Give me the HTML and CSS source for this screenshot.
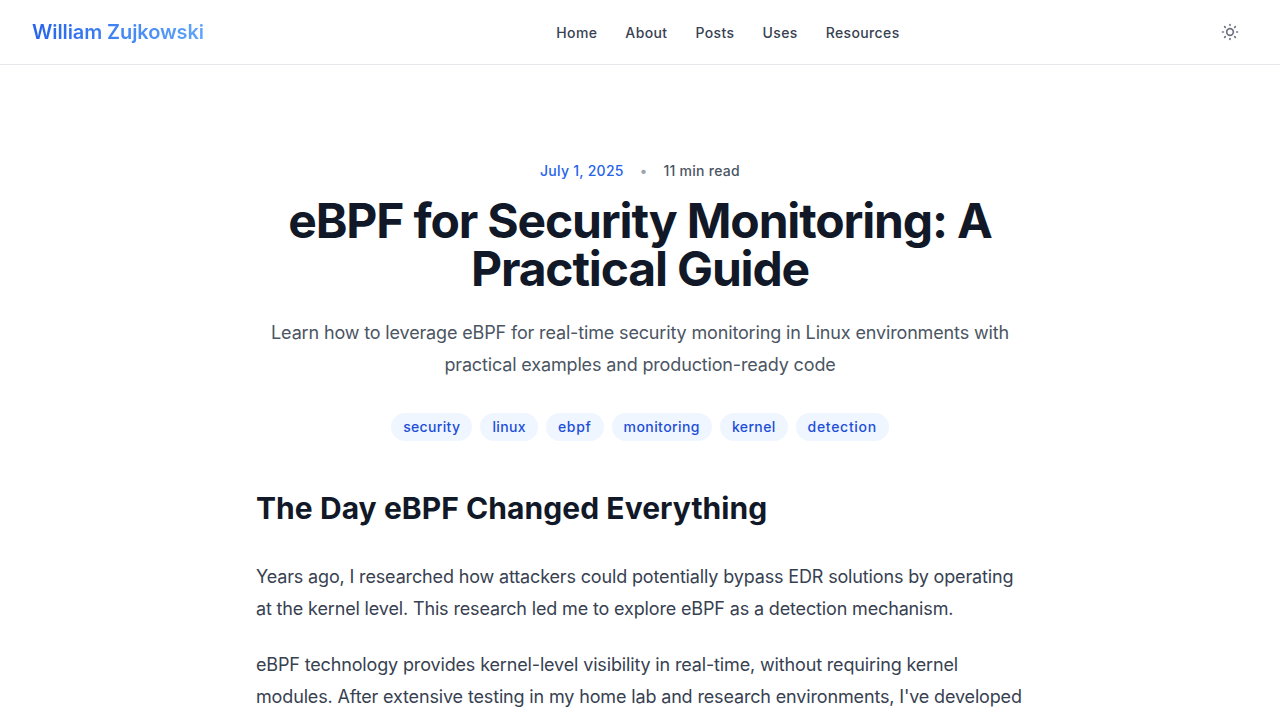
FILE: index.html
```html
<!DOCTYPE html>
<html lang="en">
<head>
<meta charset="utf-8">
<title>eBPF for Security Monitoring: A Practical Guide</title>
<link rel="stylesheet" href="styles.css">
</head>
<body>
<header class="site-header">
  <a class="brand" href="#">William Zujkowski</a>
  <nav class="site-nav">
    <a href="#">Home</a><a href="#">About</a><a href="#">Posts</a><a href="#">Uses</a><a href="#">Resources</a>
  </nav>
  <button class="theme-toggle" aria-label="Toggle theme">
    <svg width="20" height="20" viewBox="0 0 24 24" fill="none" stroke="currentColor" stroke-width="2" stroke-linecap="round" stroke-linejoin="round"><path d="M12 3v1m0 16v1m9-9h-1M4 12H3m15.364 6.364l-.707-.707M6.343 6.343l-.707-.707m12.728 0l-.707.707M6.343 17.657l-.707.707M16 12a4 4 0 11-8 0 4 4 0 018 0z"/></svg>
  </button>
</header>
<main class="article">
  <header class="article-header">
    <div class="meta"><time class="date">July 1, 2025</time><span class="dot">•</span><span>11 min read</span></div>
    <h1 class="title">eBPF for Security Monitoring: A Practical Guide</h1>
    <p class="lead">Learn how to leverage eBPF for real-time security monitoring in Linux environments with practical examples and production-ready code</p>
    <div class="tags"><a class="tag">security</a><a class="tag">linux</a><a class="tag tag-loose">ebpf</a><a class="tag tag-mid">monitoring</a><a class="tag">kernel</a><a class="tag tag-loose">detection</a></div>
  </header>
  <div class="prose">
    <h2>The Day eBPF Changed Everything</h2>
    <p>Years ago, I researched how attackers could potentially bypass EDR solutions by operating at the kernel level. This research led me to explore eBPF as a detection mechanism.</p>
    <p>eBPF technology provides kernel-level visibility in real-time, without requiring kernel modules. After extensive testing in my home lab and research environments, I've developed</p>
  </div>
</main>
</body>
</html>
```
FILE: styles.css
```css
* { box-sizing: border-box; }
body { margin: 0; height: 720px; overflow: hidden; font-family: Inter, sans-serif; color: #1f2937; background: #fff; }
a { color: inherit; text-decoration: none; }
.site-header { display: flex; align-items: center; justify-content: space-between; height: 65px; padding: 0 32px; border-bottom: 1px solid #e5e7eb; }
.brand { font-size: 20px; line-height: 28px; font-weight: 600; letter-spacing: -.1px; color: transparent; background: linear-gradient(to right, #2563eb, #60a5fa); background-clip: text; -webkit-background-clip: text; }
.site-nav { display: flex; gap: 28px; margin-left: 40px; padding-top: 2px; font-size: 14px; line-height: 20px; font-weight: 500; letter-spacing: .38px; color: #374151; }
.theme-toggle { display: flex; padding: 8px; border: 0; background: none; color: #6b7280; }
.article { width: 768px; margin: 0 auto; padding-top: 96px; }
.article-header { text-align: center; }
.meta { display: flex; justify-content: center; gap: 16px; font-size: 14px; line-height: 20px; font-weight: 500; letter-spacing: .27px; color: #4b5563; }
.date { color: #2563eb; }
.dot { color: #9ca3af; }
.title { margin: 16px 0 24px; font-size: 48px; line-height: 48px; font-weight: 700; letter-spacing: -1.16px; color: #111827; }
.lead { margin: 0; font-size: 18px; line-height: 32px; letter-spacing: -.15px; color: #4b5563; }
.tags { display: flex; justify-content: center; gap: 8px; margin-top: 32px; }
.tag { padding: 4px 12px; border-radius: 14px; background: #eff6ff; color: #1d4ed8; font-size: 14px; line-height: 20px; font-weight: 500; letter-spacing: .35px; }
.tag-mid { letter-spacing: .43px; }
.tag-loose { letter-spacing: .7px; }
.prose h2 { margin: 47px 0 33px; font-size: 30px; line-height: 40px; font-weight: 700; letter-spacing: .06px; color: #111827; }
.prose p { margin: 0 0 24px; font-size: 18px; line-height: 32px; letter-spacing: -.15px; color: #374151; }
```
